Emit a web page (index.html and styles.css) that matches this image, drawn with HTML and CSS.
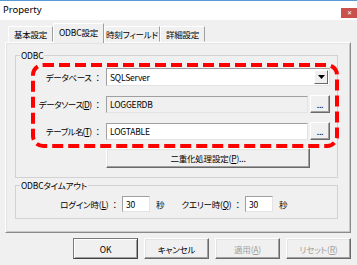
FILE: index.html
```html
<!DOCTYPE html>
<html lang="ja">
<head>
<meta charset="utf-8">
<link rel="stylesheet" href="styles.css">
</head>
<body>
<div class="window">
  <div class="titlebar">
    <span class="title">Property</span>
    <span class="close">✕</span>
  </div>
  <div class="client">
    <div class="tabs">
      <div class="tab t1">基本設定</div>
      <div class="tab t2 active">ODBC設定</div>
      <div class="tab t3">時刻フィールド</div>
      <div class="tab t4">詳細設定</div>
    </div>
    <div class="panel">
      <fieldset class="group odbc">
        <legend>ODBC</legend>
        <div class="form">
          <div class="lbl">データベース<span class="colon">：</span></div>
          <div class="combo"><span class="val">SQLServer</span><span class="drop"><svg width="7" height="4" viewBox="0 0 7 4"><path d="M0 0H7L3.5 4Z" fill="#000"/></svg></span></div>
          <div class="lbl">データソース<span class="acc">(<u>D</u>)</span><span class="colon">：</span></div>
          <div class="field"><div class="input readonly">LOGGERDB</div><button class="dots">...</button></div>
          <div class="lbl">テーブル名<span class="acc">(<u>T</u>)</span><span class="colon">：</span></div>
          <div class="field"><div class="input">LOGTABLE</div><button class="dots">...</button></div>
        </div>
        <div class="duprow"><button class="btn dup">二重化処理設定(<u>P</u>)...</button></div>
      </fieldset>
      <fieldset class="group timeout">
        <legend>ODBCタイムアウト</legend>
        <div class="trow">
          <div class="tl1">ログイン時(<u>L</u>)<span class="colon">：</span></div>
          <div class="input small">30</div>
          <div class="unit">秒</div>
          <div class="tl2">クエリー時(<u>Q</u>)<span class="colon">：</span></div>
          <div class="input small">30</div>
          <div class="unit">秒</div>
        </div>
      </fieldset>
    </div>
    <div class="buttons">
      <button class="btn dlg default">OK</button>
      <button class="btn dlg">キャンセル</button>
      <button class="btn dlg disabled">適用(<u>A</u>)</button>
      <button class="btn dlg disabled">リセット(<u>R</u>)</button>
    </div>
  </div>
  <svg class="highlight" width="308" height="85" viewBox="0 0 308 85">
    <rect x="2" y="2" width="304" height="81" rx="10" ry="10" fill="none" stroke="#ff0000" stroke-width="4" stroke-dasharray="11 5"/>
  </svg>
</div>
</body>
</html>
```
FILE: styles.css
```css
* { box-sizing: border-box; }
html, body { margin: 0; padding: 0; }
body {
  width: 357px;
  height: 265px;
  overflow: hidden;
  background: #f0f0f0;
  font-family: "Noto Sans CJK JP", "Noto Sans", sans-serif;
  font-size: 8.5px;
  letter-spacing: -0.2px;
  color: #000;
  font-feature-settings: "palt";
}
.window { position: relative; width: 357px; height: 265px; }
.titlebar {
  height: 20px;
  border-top: 1px solid #5b9bd5;
  background: #fff;
  display: flex;
  align-items: flex-start;
  padding-left: 3px;
}
.title { font-size: 9.5px; letter-spacing: 0; line-height: 18px; font-family: "Noto Sans", sans-serif; }
.close {
  margin-left: auto;
  margin-top: 7px;
  width: 16px;
  height: 10px;
  background: #c9504c;
  color: #fff;
  font-size: 6px;
  line-height: 10px;
  text-align: center;
}
.client { display: flex; flex-direction: column; }
.tabs { display: flex; align-items: flex-start; height: 22px; padding: 3px 0 0 8px; }
.tab {
  height: 16px;
  margin-top: 3px;
  line-height: 15px;
  text-align: center;
  border: 1px solid;
  border-color: #fff #a0a0a0 transparent #fff;
  white-space: nowrap;
  overflow: hidden;
}
.tab.active {
  height: 20px;
  margin-top: 0;
  line-height: 17px;
  background: #f0f0f0;
  position: relative;
  z-index: 1;
  border-bottom: none;
}
.t1 { width: 45px; }
.t2 { width: 51px; }
.t3 { width: 56px; }
.t4 { width: 45px; }
.panel {
  margin-left: 5px;
  width: 346px;
  height: 191px;
  border: 1px solid;
  border-color: #fff #8a8a8a #8a8a8a #fff;
  box-shadow: inset 1px 1px 0 #e3e3e3, inset -1px -1px 0 #c8c8c8;
  padding: 6px 12px 0 9px;
  display: flex;
  flex-direction: column;
}
.group {
  border: 1px solid #d2d2d2;
  margin: 0;
  padding: 0;
  min-width: 0;
}
.group legend {
  margin-left: 4px;
  padding: 0 1px;
  line-height: 12px;
}
.odbc { padding: 7px 7px 9px 0; }
.form {
  display: grid;
  grid-template-columns: 86px 1fr;
  column-gap: 4px;
  row-gap: 9px;
  align-items: center;
}
.lbl { text-align: right; white-space: nowrap; line-height: 18px; letter-spacing: -0.4px; }
.acc { letter-spacing: -0.6px; margin-left: -1px; }
.colon { margin-left: 2px; font-feature-settings: normal; letter-spacing: 0; }
.combo {
  height: 18px;
  display: flex;
  align-items: center;
  background: #fff;
  border: 1px solid;
  border-color: #a0a0a0 #e3e3e3 #e3e3e3 #a0a0a0;
  padding: 1px;
}
.val { flex: 1; padding-left: 2px; }
.drop {
  width: 14px;
  height: 14px;
  display: flex;
  align-items: center;
  justify-content: center;
  background: #f0f0f0;
  border: 1px solid;
  border-color: #fff #696969 #696969 #fff;
}
.field { display: flex; align-items: center; gap: 2px; height: 18px; }
.input {
  flex: 1;
  height: 17px;
  background: #fff;
  border: 1px solid;
  border-color: #a0a0a0 #e3e3e3 #e3e3e3 #a0a0a0;
  padding-left: 3px;
  line-height: 15px;
}
.input.readonly { background: #f0f0f0; }
button {
  font-family: inherit;
  font-size: 8.5px;
  letter-spacing: -0.2px;
  font-feature-settings: "palt";
  color: #000;
  padding: 0;
  margin: 0;
}
.dots {
  width: 20px;
  height: 18px;
  background: #f0f0f0;
  border: 1px solid;
  border-color: #fff #696969 #696969 #fff;
  box-shadow: inset -1px -1px 0 #a0a0a0;
  line-height: 12px;
}
.duprow { display: flex; padding-left: 90px; margin-top: 8px; }
.btn {
  background: #f0f0f0;
  border: 1px solid;
  border-color: #fff #696969 #696969 #fff;
  box-shadow: inset -1px -1px 0 #a0a0a0, inset 1px 1px 0 #e3e3e3;
}
.dup { width: 204px; height: 20px; }
.timeout { margin-top: 1px; padding: 5px 0 6px 0; }
.trow { display: flex; align-items: center; height: 16px; }
.tl1 { width: 103px; text-align: right; white-space: nowrap; }
.tl2 { width: 76px; text-align: right; white-space: nowrap; }
.input.small { flex: none; width: 28px; height: 16px; margin-left: 3px; line-height: 14px; }
.unit { margin-left: 6px; width: 10px; }
.buttons { display: flex; gap: 6px; padding: 5px 0 0 73px; }
.dlg { width: 65px; height: 21px; }
.default {
  border-color: #7a7a7a #404040 #404040 #7a7a7a;
  box-shadow: inset 1px 1px 0 #fff, inset -1px -1px 0 #a0a0a0;
}
.disabled { color: #a0a0a0; }
.highlight { position: absolute; left: 31px; top: 63px; }
```
